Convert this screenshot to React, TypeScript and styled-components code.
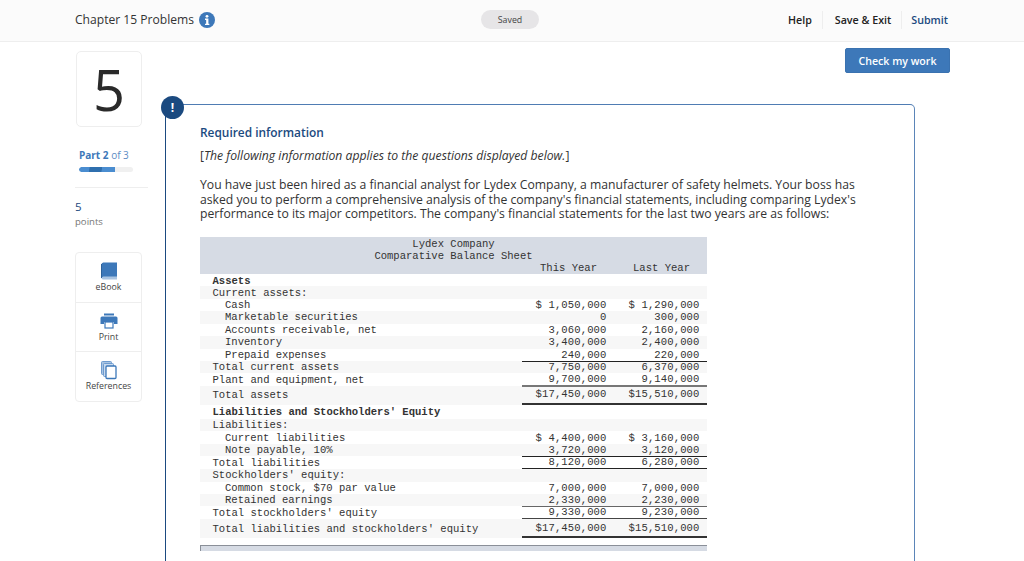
import React from "react";
import styled, { createGlobalStyle } from "styled-components";

const Global = createGlobalStyle`
  html, body { margin: 0; padding: 0; height: 561px; overflow: hidden; background: #fff; }
  body { font-family: "Open Sans", "Lato", sans-serif; color: #333; }
`;
const TopBar = styled.header`
  height: 41px; border-bottom: 1px solid #eeeeee; background: #fbfbfb;
  display: grid; grid-template-columns: 1fr auto 1fr; align-items: center; padding: 0 76px 0 75px;
`;
const Title = styled.div`display: flex; align-items: center; gap: 5px; font-size: 12.1px; color: #333; position: relative; top: -1px;`;
const Pill = styled.div`
  width: 58px; height: 19px; border-radius: 10px; background: #e6e5e7; color: #444; font-size: 8.8px;
  display: flex; align-items: center; justify-content: center; margin: 0 0 0 -3px; position: relative; top: -1px;
`;
const Nav = styled.nav`display: flex; justify-content: flex-end; align-items: center; position: relative; top: -1px;`;
const NavItem = styled.span<{ $primary?: boolean; $last?: boolean }>`
  font-size: 10.7px; font-weight: 600; color: ${p => (p.$primary ? "#1b4a80" : "#222")};
  padding: 0 ${p => (p.$last ? 0 : 10)}px 0 ${p => (p.$last ? 9 : 12)}px; height: 18px; line-height: 18px;
  border-right: ${p => (p.$last ? "none" : "1px solid #eee")};
`;
const Body = styled.div`display: flex; padding-left: 75px; height: 519px; overflow: hidden;`;
const Side = styled.aside`width: 73px; flex: none; display: flex; flex-direction: column; padding-top: 9px;`;
const NumberStack = styled.div`
  width: 66px; height: 76px; margin-left: 1px; position: relative; border: 1px solid #eee; border-radius: 5px; box-sizing: border-box;
  background: #fff; display: flex; align-items: center; justify-content: center; font-size: 56px; font-weight: 400; color: #2a2a2a;
  &::before {
    content: ""; position: absolute; left: 2px; top: 2px; width: 66px; height: 76px; border: 1px solid #ececec; border-radius: 5px;
    box-sizing: border-box; z-index: -1;
  }
`;
const PartLabel = styled.div`margin: 22px 0 0 4px; font-size: 10px; color: #5d8cc4; line-height: 12px; b { color: #3d78b9; font-weight: 700; }`;
const Progress = styled.div`margin: 6px 0 0 4px; width: 54px; height: 5px; border-radius: 3px; background: #f0f0f0; overflow: hidden;`;
const ProgressFill = styled.div`
  height: 100%; border-radius: 3px 0 0 3px;
  background: linear-gradient(100deg, #4a8dd0 0 28%, #2f6fae 30% 62%, #4a8dd0 64%);
`;
const Rule = styled.div`height: 1px; background: #eee; margin-top: 15px;`;
const Points = styled.div`margin-top: 12px; font-size: 11.5px; line-height: 14px; color: #1b4a80;`;
const PointsLabel = styled.div`font-size: 9.6px; line-height: 14px; color: #777; margin-top: 1px;`;
const Tools = styled.div`margin-top: 23px; width: 67px; height: 150px; border: 1px solid #eee; border-radius: 4px; box-sizing: border-box; display: flex; flex-direction: column;`;
const Tool = styled.div`
  flex: 1; display: flex; flex-direction: column; align-items: center; justify-content: flex-start; padding-top: 8px; gap: 0;
  font-size: 8.8px; color: #444; line-height: 13px; & + & { border-top: 1px solid #eee; }
`;
const ToolIcon = styled.svg`width: 18px; height: 20px; flex: none;`;
const ActionCol = styled.div`flex: 1; position: relative; min-width: 0;`;
const CheckButton = styled.button`
  position: absolute; left: 697px; top: 6px; width: 105px; height: 25px; border: 1px solid #3a72b0; border-radius: 2px;
  background: #3d78b9; color: #fff; font: 600 10.6px "Open Sans", sans-serif; padding: 0;
`;
const Card = styled.section`
  position: absolute; left: 17px; top: 62px; width: 750px; height: 600px; box-sizing: border-box;
  border-top: 1px solid #4f7cb3; border-left: 1px solid #1b4a80; border-right: 1px solid #5b85b8; border-radius: 0 5px 0 0;
  padding: 20px 0 0 34px;
`;
const Badge = styled.div`
  position: absolute; left: -5px; top: -9px; width: 23px; height: 23px; border-radius: 50%; background: #1b4a80; color: #fff;
  font-size: 12px; font-weight: 700; display: flex; align-items: center; justify-content: center;
`;
const Heading = styled.h2`margin: 0; font-size: 11.9px; line-height: 16px; font-weight: 600; color: #1b4a80; position: relative; top: -1px;`;
const Lead = styled.p`margin: 7px 0 0; line-height: 16px; color: #333; font-size: 12.2px; span { font-style: italic; }`;
const Para = styled.p`margin: 14px 0 0; width: 662px; line-height: 14.5px; color: #333; font-size: 12.2px;`;
const Sheet = styled.div`
  margin-top: 15px; width: 507px; font-family: "Liberation Mono", "Courier New", monospace; font-size: 10.55px; color: #333;
`;
const SheetHead = styled.div`background: #d6dbe4; height: 37px; padding-top: 1px; box-sizing: border-box; line-height: 12.3px;`;
const HeadCenter = styled.div`text-align: center; white-space: pre;`;
const HeadYears = styled.div`display: grid; grid-template-columns: 322px 92px 93px; white-space: pre;`;
const HeadYear = styled.span`text-align: right; padding-right: 17px;`;
const Row = styled.div<{ $gray?: boolean; $h?: number }>`
  display: grid; grid-template-columns: 322px 92px 93px; height: ${p => p.$h ?? 12.45}px; align-items: center;
  background: ${p => (p.$gray ? "#f7f7f7" : "#fff")};
`;
const Label = styled.div<{ $indent?: boolean; $bold?: boolean; $drop?: number }>`
  padding-left: ${p => (p.$indent ? 25 : 12.5)}px; font-weight: ${p => (p.$bold ? 700 : 400)}; white-space: pre;
  padding-top: ${p => p.$drop ?? 0}px;
`;
const Num = styled.div<{ $rule?: string; $drop?: number }>`
  height: 100%; box-sizing: border-box; display: flex; align-items: center; justify-content: flex-end; white-space: pre;
  padding-right: 7.500px; letter-spacing: 0.12px; border-bottom: ${p => p.$rule ?? "none"}; padding-top: ${p => p.$drop ?? 0}px;
`;
const SheetFoot = styled.div`height: 6px; margin-top: 7px; background: #d6dbe4; border-top: 1px solid #8a8f98; border-left: 1px solid #8a8f98; box-sizing: border-box;`;

const thin = "1px solid #222";
const mid = "2px solid #777";
const thick = "2px solid #333";
type R = { l: string; a?: string; b?: string; g?: boolean; i?: boolean; bold?: boolean; rule?: string; h?: number; drop?: number };
const rows: R[] = [
  { l: "Assets", bold: true, h: 12.9, drop: 1 },
  { l: "Current assets:", g: true },
  { l: "Cash", i: true, a: "$ 1,050,000", b: "$ 1,290,000" },
  { l: "Marketable securities", i: true, g: true, a: "0", b: "300,000" },
  { l: "Accounts receivable, net", i: true, a: "3,060,000", b: "2,160,000" },
  { l: "Inventory", i: true, g: true, a: "3,400,000", b: "2,400,000" },
  { l: "Prepaid expenses", i: true, a: "240,000", b: "220,000", rule: thin },
  { l: "Total current assets", g: true, a: "7,750,000", b: "6,370,000" },
  { l: "Plant and equipment, net", a: "9,700,000", b: "9,140,000", rule: mid },
  { l: "Total assets", g: true, a: "$17,450,000", b: "$15,510,000", rule: thick, h: 19 },
  { l: "Liabilities and Stockholders' Equity", bold: true, h: 14, drop: 1 },
  { l: "Liabilities:", g: true },
  { l: "Current liabilities", i: true, a: "$ 4,400,000", b: "$ 3,160,000" },
  { l: "Note payable, 10%", i: true, g: true, a: "3,720,000", b: "3,120,000", rule: thin },
  { l: "Total liabilities", a: "8,120,000", b: "6,280,000", rule: thin },
  { l: "Stockholders' equity:", g: true, h: 12.9 },
  { l: "Common stock, $70 par value", i: true, a: "7,000,000", b: "7,000,000" },
  { l: "Retained earnings", i: true, g: true, a: "2,330,000", b: "2,230,000", rule: "1px solid #666" },
  { l: "Total stockholders' equity", a: "9,330,000", b: "9,230,000", rule: "1px solid #444" },
  { l: "Total liabilities and stockholders' equity", g: true, a: "$17,450,000", b: "$15,510,000", rule: thick, h: 19.6, drop: 1 },
];

const InfoIcon = () => (
  <svg width="16" height="16" viewBox="0 0 17 17">
    <circle cx="8.500" cy="8.500" r="8.500" fill="#3d78b9" />
    <circle cx="8.500" cy="4.600" r="1.500" fill="#fff" />
    <path d="M6.400 7h3.600v5.400h1v1.400H6.400v-1.400h1.200V8.400H6.400z" fill="#fff" />
  </svg>
);

export default function App() {
  return (
    <>
      <Global />
      <TopBar>
        <Title>Chapter 15 Problems <InfoIcon /></Title>
        <Pill>Saved</Pill>
        <Nav>
          <NavItem>Help</NavItem>
          <NavItem>Save &amp; Exit</NavItem>
          <NavItem $primary $last>Submit</NavItem>
        </Nav>
      </TopBar>
      <Body>
        <Side>
          <NumberStack>5</NumberStack>
          <PartLabel><b>Part 2</b> of 3</PartLabel>
          <Progress><ProgressFill style={{ width: `${(2 / 3) * 100}%` }} /></Progress>
          <Rule />
          <Points>5</Points>
          <PointsLabel>points</PointsLabel>
          <Tools>
            <Tool>
              <ToolIcon viewBox="0 0 18 20">
                <path d="M1.500 3A2 2 0 0 1 3.500 1.500H17v14.500H3.500a2 2 0 0 0-2 1.200z" fill="#3d78b9" />
                <path d="M1.500 17a2 2 0 0 1 2-1.500H17v3H3.500a2 2 0 0 1-2-1.500z" fill="#a9c4e2" />
                <path d="M1.500 3v14" stroke="#2f6299" strokeWidth="1" />
              </ToolIcon>
              eBook
            </Tool>
            <Tool>
              <ToolIcon viewBox="0 0 18 20">
                <rect x="4" y="2.500" width="10" height="2" fill="#3d78b9" />
                <path d="M0.500 7a1.500 1.500 0 0 1 1.500-1.500h14A1.500 1.500 0 0 1 17.500 7v6h-3.500v-2H4v2H0.500z" fill="#3d78b9" />
                <rect x="5" y="11" width="8" height="6" fill="#fff" stroke="#3d78b9" strokeWidth="1.200" />
              </ToolIcon>
              Print
            </Tool>
            <Tool>
              <ToolIcon viewBox="0 0 18 20">
                <rect x="1.500" y="1.500" width="10" height="13" rx="1" fill="#a9c4e2" stroke="#6d9bcf" />
                <rect x="3.500" y="3.500" width="10" height="13" rx="1" fill="#c9daee" stroke="#6d9bcf" />
                <rect x="6" y="6" width="10" height="12.500" rx="1" fill="#fff" stroke="#3d78b9" strokeWidth="1.300" />
              </ToolIcon>
              References
            </Tool>
          </Tools>
        </Side>
        <ActionCol>
          <CheckButton>Check my work</CheckButton>
          <Card>
            <Badge>!</Badge>
            <Heading>Required information</Heading>
            <Lead>[<span>The following information applies to the questions displayed below.</span>]</Lead>
            <Para>
              You have just been hired as a financial analyst for Lydex Company, a manufacturer of safety helmets. Your boss has asked you to perform a comprehensive analysis of the company's financial statements, including comparing Lydex's performance to its major competitors. The company's financial statements for the last two years are as follows:
            </Para>
            <Sheet>
              <SheetHead>
                <HeadCenter>Lydex Company</HeadCenter>
                <HeadCenter>Comparative Balance Sheet</HeadCenter>
                <HeadYears><span /><HeadYear>This Year</HeadYear><HeadYear>Last Year</HeadYear></HeadYears>
              </SheetHead>
              {rows.map(r => (
                <Row key={r.l} $gray={r.g} $h={r.h}>
                  <Label $indent={r.i} $bold={r.bold} $drop={r.drop}>{r.l}</Label>
                  <Num $rule={r.rule} $drop={r.drop}>{r.a}</Num>
                  <Num $rule={r.rule} $drop={r.drop}>{r.b}</Num>
                </Row>
              ))}
              <SheetFoot />
            </Sheet>
          </Card>
        </ActionCol>
      </Body>
    </>
  );
}
